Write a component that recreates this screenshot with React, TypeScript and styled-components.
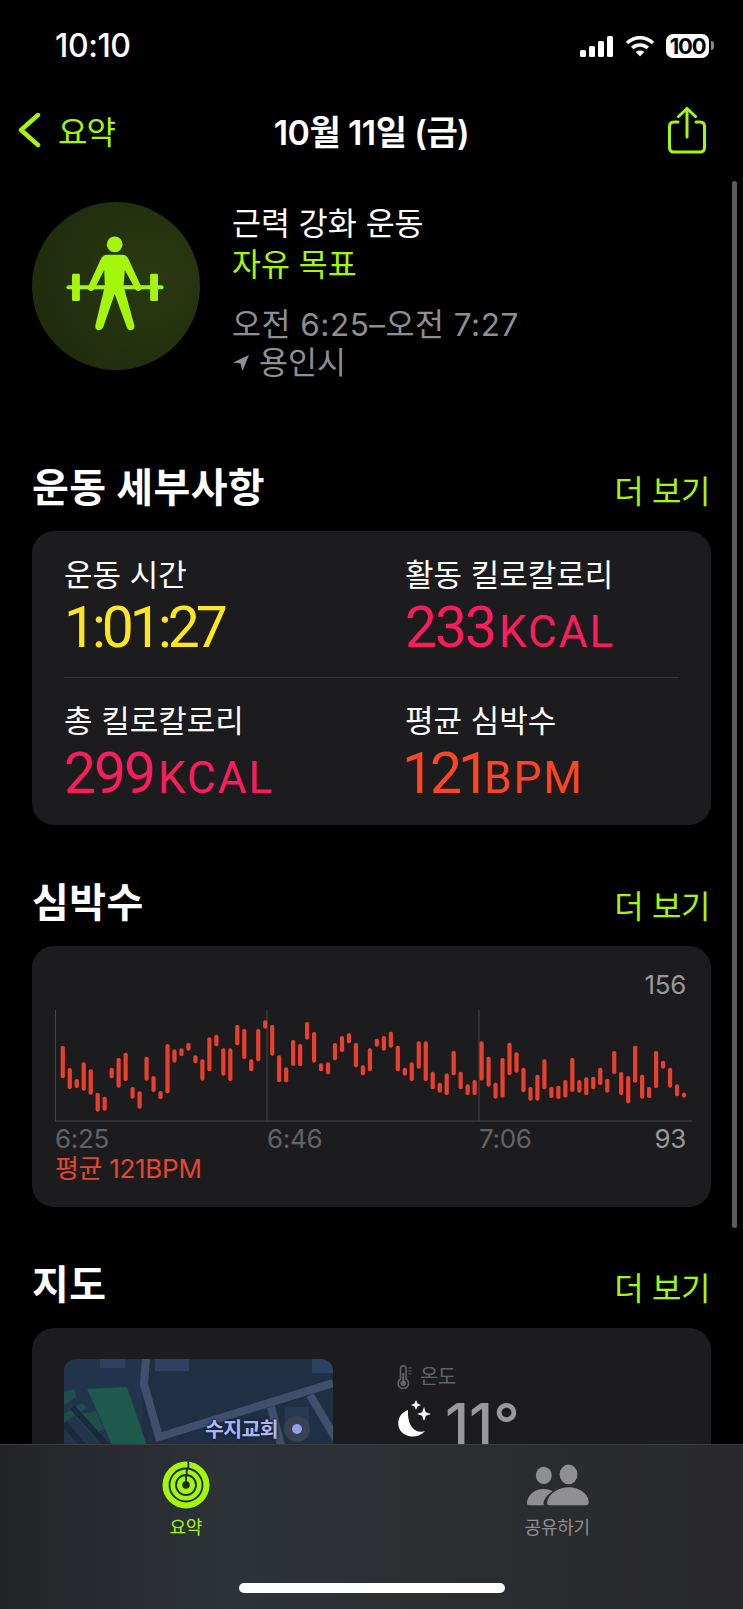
import styled, { createGlobalStyle } from 'styled-components';

const GREEN = '#a3f60c';
const FONT = 'Inter, "Noto Sans CJK KR", sans-serif';

// [top, bottom] of each heart-rate bar, in chart pixels x3
const HEART_BARS: [number, number][] = [
  [258, 355], [324, 387], [357, 384], [307, 392], [328, 404], [398, 455], [410, 452], [323, 355],
  [294, 383], [278, 363], [381, 416], [394, 446], [290, 362], [348, 396], [393, 417], [252, 400],
  [268, 308], [265, 288], [249, 272], [286, 310], [298, 362], [232, 334], [224, 259], [265, 347],
  [265, 363], [194, 256], [207, 297], [298, 334], [207, 304], [181, 206], [195, 287], [286, 367],
  [322, 367], [240, 318], [252, 318], [186, 239], [216, 308], [310, 334], [307, 343], [249, 301],
  [228, 276], [220, 250], [249, 322], [316, 346], [265, 334], [236, 260], [228, 272], [215, 263],
  [257, 334], [323, 347], [307, 363], [244, 326], [244, 363], [335, 388], [368, 398], [340, 405],
  [273, 346], [335, 388], [373, 405], [360, 405], [244, 362], [290, 380], [368, 416], [294, 413],
  [248, 346], [277, 338], [323, 397], [381, 422], [344, 422], [298, 388], [380, 414], [377, 417],
  [360, 413], [294, 396], [360, 398], [352, 405], [350, 388], [323, 375], [356, 398], [273, 342],
  [336, 405], [348, 430], [257, 368], [344, 416], [381, 414], [273, 384], [302, 326], [323, 383],
  [373, 409], [398, 413],
];

const GlobalStyle = createGlobalStyle`
  html, body {
    margin: 0;
    padding: 0;
    background: #000;
  }
  * {
    box-sizing: border-box;
  }
`;

const Screen = styled.div`
  position: relative;
  width: 743px;
  height: 1609px;
  overflow: hidden;
  background: #000;
  color: #fff;
  font-family: ${FONT};
`;

const StatusBar = styled.div`
  height: 92px;
  padding: 28px 34px 0 55px;
  display: flex;
  justify-content: space-between;
  align-items: flex-start;
`;

const Clock = styled.div`
  font-size: 32px;
  line-height: 36px;
  font-weight: 500;
  letter-spacing: -0.4px;
`;

const StatusIcons = styled.div`
  display: flex;
  align-items: center;
  height: 36px;
  gap: 10px;
`;

const Battery = styled.div`
  position: relative;
  width: 43px;
  height: 24px;
  border-radius: 7px;
  background: #fff;
  color: #000;
  font-size: 22px;
  font-weight: 700;
  line-height: 24px;
  text-align: center;
  letter-spacing: -1.2px;

  &::after {
    content: '';
    position: absolute;
    right: -5px;
    top: 7px;
    width: 3px;
    height: 9px;
    border-radius: 0 3px 3px 0;
    background: #8a8a8a;
  }
`;

const NavBar = styled.div`
  height: 76px;
  padding: 0 37px;
  display: grid;
  grid-template-columns: 1fr auto 1fr;
  align-items: center;
`;

const BackLink = styled.div`
  display: flex;
  align-items: center;
  gap: 17px;
  margin-left: -19px;
  color: ${GREEN};
  font-size: 32px;
  letter-spacing: -1px;
`;

const NavTitle = styled.div`
  font-size: 34px;
  font-weight: 600;
  letter-spacing: -0.6px;
`;

const NavAction = styled.div`
  display: flex;
  justify-content: flex-end;
`;

const Content = styled.div`
  padding: 34px 32px 0;
`;

const WorkoutHeader = styled.div`
  display: flex;
  gap: 32px;
  height: 168px;
`;

const WorkoutText = styled.div`
  padding-top: 1px;
  font-size: 31.5px;
  line-height: 41px;
`;

const WorkoutLine = styled.div<{ $color: string; $gap?: number; $tracking?: number }>`
  color: ${(p) => p.$color};
  margin-top: ${(p) => p.$gap ?? 0}px;
  letter-spacing: ${(p) => p.$tracking ?? 0}px;
  display: flex;
  align-items: center;
  gap: 9px;
`;

const Section = styled.section<{ $first?: boolean }>`
  margin-top: ${(p) => (p.$first ? 95 : 55)}px;
`;

const SectionHead = styled.div`
  height: 44px;
  margin-bottom: 22px;
  display: flex;
  justify-content: space-between;
  align-items: center;
`;

const SectionTitle = styled.h2`
  margin: 0;
  padding-bottom: 5px;
  font-size: 40px;
  font-weight: 700;
  letter-spacing: 0.4px;
`;

const MoreLink = styled.div`
  color: ${GREEN};
  font-size: 32px;
  letter-spacing: -0.4px;
  padding: 3px 1px 0 0;
`;

const Card = styled.div`
  background: #1c1c1e;
  border-radius: 22px;
`;

const MetricsCard = styled(Card)`
  height: 294px;
  padding: 24px 32px 0;
`;

const MetricsRow = styled.div<{ $divided?: boolean }>`
  display: grid;
  grid-template-columns: 341px 1fr;
  height: 123px;
  border-bottom: ${(p) => (p.$divided ? '1px solid #343436' : 'none')};
  margin-bottom: ${(p) => (p.$divided ? 23 : 0)}px;
`;

const MetricLabel = styled.div`
  font-size: 31px;
  line-height: 39px;
`;

const MetricValue = styled.div<{ $color: string; $tight?: boolean; $shift?: number }>`
  color: ${(p) => p.$color};
  font-family: Roboto, sans-serif;
  font-size: 57px;
  line-height: 58px;
  letter-spacing: ${(p) => (p.$tight ? -4 : -2)}px;
  margin: 5px 0 0 ${(p) => p.$shift ?? 0}px;
`;

const MetricUnit = styled.span<{ $gap?: number }>`
  font-size: 44px;
  letter-spacing: 2px;
  margin-left: ${(p) => p.$gap ?? 4}px;
`;

const HeartCard = styled(Card)`
  height: 261px;
  padding: 25px 0 0 23px;
`;

const ChartMax = styled.div`
  height: 39px;
  padding-right: 25px;
  text-align: right;
  color: #98989d;
  font-size: 26px;
  line-height: 28px;
  letter-spacing: -0.3px;
`;

const ChartSvg = styled.svg`
  display: block;
`;

const ChartLabels = styled.div`
  display: grid;
  grid-template-columns: 212px 212px 1fr auto;
  padding-right: 25px;
  margin-top: 2px;
  color: #636366;
  font-size: 26px;
  line-height: 29px;
  letter-spacing: -0.3px;
`;

const ChartMin = styled.span`
  color: #98989d;
`;

const ChartAverage = styled.div`
  color: #e8452c;
  font-size: 26px;
  line-height: 32px;
  letter-spacing: -0.3px;
`;

const MapCard = styled(Card)`
  height: 240px;
  padding: 31px 32px 0;
  display: flex;
  gap: 64px;
`;

const MapTile = styled.div`
  position: relative;
  width: 269px;
  height: 150px;
  border-radius: 12px;
  overflow: hidden;
`;

const MapLabel = styled.span`
  position: absolute;
  left: 141px;
  top: 58px;
  color: #a9b7f5;
  font-size: 20.5px;
  font-weight: 700;
  line-height: 26px;
  letter-spacing: -0.6px;
  text-shadow: 0 0 3px #141c2c, 0 0 3px #141c2c;
`;

const WeatherColumn = styled.div`
  display: flex;
  flex-direction: column;
`;

const WeatherLabel = styled.div`
  display: flex;
  align-items: center;
  gap: 8px;
  color: #636366;
  font-size: 20px;
  line-height: 24px;
  letter-spacing: -0.6px;
  margin-top: 6px;
`;

const WeatherNow = styled.div`
  display: flex;
  align-items: center;
  gap: 14px;
  margin-top: 5px;
  color: #98989d;
  font-size: 58px;
  line-height: 60px;
  font-weight: 500;
`;

const MoonSlot = styled.div`
  display: flex;
  margin-bottom: 10px;
`;

const TabBar = styled.nav`
  position: absolute;
  left: 0;
  right: 0;
  bottom: 0;
  height: 165px;
  padding-top: 9px;
  display: grid;
  grid-template-columns: 1fr 1fr;
  align-items: start;
  border-top: 1px solid #3d3e40;
  background: linear-gradient(90deg, #232427 0%, #2d3239 30%, #2c2e32 55%, #29292b 100%);
`;

const TabItem = styled.div<{ $active?: boolean }>`
  display: flex;
  flex-direction: column;
  align-items: center;
  color: ${(p) => (p.$active ? GREEN : '#8e8e93')};
  font-size: 18px;
  line-height: 22px;
  letter-spacing: -0.2px;
`;

const TabIconSlot = styled.div`
  height: 61px;
  display: flex;
  align-items: center;
  margin-bottom: 2px;
`;

const HomeIndicator = styled.div`
  position: absolute;
  left: 239px;
  bottom: 16px;
  width: 266px;
  height: 10px;
  border-radius: 5px;
  background: #fff;
`;

const ScrollThumb = styled.div`
  position: absolute;
  left: 732px;
  top: 181px;
  width: 5px;
  height: 1047px;
  border-radius: 3px;
  background: #5c5c5e;
`;

function SignalIcon() {
  return (
    <svg width="34" height="21" viewBox="0 0 34 21" fill="#fff">
      <rect x="0" y="14" width="6" height="7" rx="1.5" />
      <rect x="9" y="10" width="6" height="11" rx="1.5" />
      <rect x="18" y="5" width="6" height="16" rx="1.5" />
      <rect x="27" y="0" width="6" height="21" rx="1.5" />
    </svg>
  );
}

function WifiIcon() {
  return (
    <svg width="32" height="22" viewBox="0 0 30 22" fill="none" stroke="#fff" strokeWidth="3.6">
      <path d="M2 8 C9.5 1 20.5 1 28 8" />
      <path d="M7.2 13 C11.5 9 18.5 9 22.8 13" />
      <path d="M15 21.5 L10.8 17 C13 15 17 15 19.2 17 Z" fill="#fff" stroke="none" />
    </svg>
  );
}

function ChevronIcon() {
  return (
    <svg width="23" height="36" viewBox="0 0 23 36" fill="none" stroke={GREEN} strokeWidth="4.4" strokeLinecap="round" strokeLinejoin="round">
      <path d="M20 3 L3 18 L20 33" />
    </svg>
  );
}

function ShareIcon() {
  return (
    <svg width="38" height="47" viewBox="0 0 38 47" fill="none" stroke={GREEN} strokeWidth="3" strokeLinecap="round" strokeLinejoin="round">
      <path d="M10 15 H6 Q1.5 15 1.5 19.5 V40.5 Q1.5 45 6 45 H32 Q36.5 45 36.5 40.5 V19.5 Q36.5 15 32 15 H28" />
      <path d="M19 2 V30" />
      <path d="M10.5 9.5 L19 1.5 L27.5 9.5" />
    </svg>
  );
}

function WorkoutBadge() {
  return (
    <svg width="168" height="168" viewBox="6 6 512 512">
      <defs>
        <radialGradient id="badgeFill" cx="70%" cy="45%" r="75%">
          <stop offset="0%" stopColor="#2a3911" />
          <stop offset="100%" stopColor="#1f2b0d" />
        </radialGradient>
      </defs>
      <circle cx="262" cy="262" r="256" fill="url(#badgeFill)" />
      <g fill={GREEN}>
        <circle cx="258" cy="135" r="24" />
        <rect x="111" y="260" width="296" height="12" rx="6" />
        <rect x="128" y="225" width="24" height="83" rx="4" />
        <rect x="366" y="225" width="24" height="83" rx="4" />
        <path
          d="M236 167 H281 Q294 167 300 180 L339 264 Q342 274 331 277 Q324 278 320 270 L289 213 L285 262 L318 382 Q319 396 306 397 Q298 397 295 388 L258 286 L223 388 Q219 397 211 397 Q198 396 199 382 L228 262 L226 213 L197 270 Q192 278 185 277 Q174 274 177 264 L216 180 Q222 167 236 167 Z"
        />
      </g>
    </svg>
  );
}

function LocationArrow() {
  return (
    <svg width="18" height="18" viewBox="0 0 18 18" fill="#8e8e93">
      <path d="M17 1 L10.5 17 L8.5 9.5 L1 8.5 Z" />
    </svg>
  );
}

function HeartChart() {
  return (
    <ChartSvg width="637" height="112" viewBox="0 0 637 112">
      <line x1="0.5" y1="0" x2="0.5" y2="111" stroke="#48484a" />
      <line x1="212" y1="0" x2="212" y2="111" stroke="#48484a" />
      <line x1="424" y1="0" x2="424" y2="111" stroke="#48484a" />
      <line x1="0" y1="111" x2="637" y2="111" stroke="#48484a" />
      {HEART_BARS.map(([top, bottom], i) => (
        <rect
          key={i}
          x={5.7 + i * 6.98}
          y={top / 3 - 50}
          width="4.2"
          height={(bottom - top) / 3}
          rx="1.8"
          fill="#e8402a"
        />
      ))}
    </ChartSvg>
  );
}

function MapDrawing() {
  return (
    <svg width="269" height="150" viewBox="0 0 269 150" style={{ display: 'block' }}>
      <rect width="269" height="150" fill="#1f3045" />
      <rect x="0" y="0" width="78" height="150" fill="#22354c" />
      <rect x="36" y="0" width="25" height="9" fill="#2c4260" />
      <rect x="91" y="0" width="34" height="12" fill="#2c4260" />
      <rect x="248" y="0" width="21" height="14" fill="#2c4260" />
      <rect x="221" y="48" width="24" height="17" fill="#263a54" />
      <path d="M23 30 L63 28 L84 90 L50 90 Z" fill="#1d5a4b" />
      <path d="M0 33 L10 30 L12 38 L0 46 Z M0 55 L18 44 L22 49 L0 64 Z" fill="#1c5049" />
      <path d="M10 56 L32 52 L40 70 L28 76 Z" fill="#1c5049" />
      <path d="M8 48 L48 92 M0 64 L22 90" stroke="#1a2a3c" strokeWidth="6" fill="none" />
      <g fill="none" stroke="#3f506c" strokeWidth="8">
        <path d="M82 0 L80 25 L95 78 L269 24" />
        <path d="M207 48 L218 90" />
        <path d="M246 36 L272 80" />
      </g>
      <circle cx="233" cy="70" r="13" fill="#37424e" />
      <circle cx="233" cy="70" r="5" fill="#929ff0" />
    </svg>
  );
}

function ThermometerIcon() {
  return (
    <svg width="15" height="24" viewBox="0 0 15 24" fill="none" stroke="#636366" strokeWidth="1.6">
      <path d="M3.5 3.5 a2.8 2.8 0 0 1 5.6 0 V14 a5.2 5.2 0 1 1 -5.6 0 Z" />
      <circle cx="6.3" cy="18.3" r="2.8" fill="#636366" stroke="none" />
      <path d="M6.3 8 V17" strokeWidth="2" />
      <path d="M11.5 3 H14.5 M11.5 6 H14.5 M11.5 9 H14.5" strokeWidth="1" />
    </svg>
  );
}

function MoonIcon() {
  return (
    <svg width="34" height="38" viewBox="0 0 34 38" fill="#fff">
      <path d="M11 10 C2 13 -1 23 3 30 C8 38 21 39 28 31 C20 34 10 28 11 10 Z" />
      <path d="M19 0 L20.4 3.6 L24 5 L20.4 6.4 L19 10 L17.6 6.4 L14 5 L17.6 3.6 Z" />
      <path d="M27 7 L28.8 12.2 L34 14 L28.8 15.8 L27 21 L25.2 15.8 L20 14 L25.2 12.2 Z" />
    </svg>
  );
}

function RingsIcon() {
  return (
    <svg width="48" height="48" viewBox="-24 -24 48 48" fill="none">
      <circle r="23.5" fill={GREEN} />
      <circle r="16.5" stroke="#1f2a16" strokeWidth="1.8" />
      <circle r="10" stroke="#1f2a16" strokeWidth="1.8" />
      <circle r="3.8" fill="#1f2a16" />
      <path d="M2 -23.5 C3 -19 3 -17 1 -15.5 C0 -13 1.5 -11 0.5 -9" stroke="#1f2a16" strokeWidth="1.8" />
      <path d="M0 -10 V-3" stroke="#1f2a16" strokeWidth="1.8" />
    </svg>
  );
}

function PeopleIcon() {
  return (
    <svg width="66" height="45" viewBox="40 25 200 135" fill="#8e8e93">
      <ellipse cx="100" cy="65" rx="24" ry="26" />
      <ellipse cx="175" cy="62" rx="27" ry="30" />
      <path d="M118 155 Q109 155 110 146 C114 120 145 101 175 101 C205 101 236 120 236 146 Q236 155 228 155 Z" />
      <path d="M101 155 H56 Q48 155 49 146 C53 122 74 106 98 106 C108 106 118 108 127 113 C112 122 102 135 99 148 Q99 152 101 155 Z" />
    </svg>
  );
}

export default function App(): JSX.Element {
  return (
    <Screen>
      <GlobalStyle />
      <StatusBar>
        <Clock>10:10</Clock>
        <StatusIcons>
          <SignalIcon />
          <WifiIcon />
          <Battery>100</Battery>
        </StatusIcons>
      </StatusBar>

      <NavBar>
        <BackLink>
          <ChevronIcon />
          요약
        </BackLink>
        <NavTitle>10월 11일 (금)</NavTitle>
        <NavAction>
          <ShareIcon />
        </NavAction>
      </NavBar>

      <Content>
        <WorkoutHeader>
          <WorkoutBadge />
          <WorkoutText>
            <WorkoutLine $color="#fff">근력 강화 운동</WorkoutLine>
            <WorkoutLine $color={GREEN}>자유 목표</WorkoutLine>
            <WorkoutLine $color="#8e8e93" $gap={19} $tracking={0.5}>오전 6:25–오전 7:27</WorkoutLine>
            <WorkoutLine $color="#8e8e93" $gap={-3}>
              <LocationArrow />
              용인시
            </WorkoutLine>
          </WorkoutText>
        </WorkoutHeader>

        <Section $first>
          <SectionHead>
            <SectionTitle>운동 세부사항</SectionTitle>
            <MoreLink>더 보기</MoreLink>
          </SectionHead>
          <MetricsCard>
            <MetricsRow $divided>
              <div>
                <MetricLabel>운동 시간</MetricLabel>
                <MetricValue $color="#ffe620" $tight>1:01:27</MetricValue>
              </div>
              <div>
                <MetricLabel>활동 킬로칼로리</MetricLabel>
                <MetricValue $color="#fa1c5c">
                  233<MetricUnit>KCAL</MetricUnit>
                </MetricValue>
              </div>
            </MetricsRow>
            <MetricsRow>
              <div>
                <MetricLabel>총 킬로칼로리</MetricLabel>
                <MetricValue $color="#fa1c5c">
                  299<MetricUnit>KCAL</MetricUnit>
                </MetricValue>
              </div>
              <div>
                <MetricLabel>평균 심박수</MetricLabel>
                <MetricValue $color="#ff4422" $tight $shift={-3}>
                  121<MetricUnit $gap={-2}>BPM</MetricUnit>
                </MetricValue>
              </div>
            </MetricsRow>
          </MetricsCard>
        </Section>

        <Section>
          <SectionHead>
            <SectionTitle>심박수</SectionTitle>
            <MoreLink>더 보기</MoreLink>
          </SectionHead>
          <HeartCard>
            <ChartMax>156</ChartMax>
            <HeartChart />
            <ChartLabels>
              <span>6:25</span>
              <span>6:46</span>
              <span>7:06</span>
              <ChartMin>93</ChartMin>
            </ChartLabels>
            <ChartAverage>평균 121BPM</ChartAverage>
          </HeartCard>
        </Section>

        <Section>
          <SectionHead>
            <SectionTitle>지도</SectionTitle>
            <MoreLink>더 보기</MoreLink>
          </SectionHead>
          <MapCard>
            <MapTile>
              <MapDrawing />
              <MapLabel>수지교회</MapLabel>
            </MapTile>
            <WeatherColumn>
              <WeatherLabel>
                <ThermometerIcon />
                온도
              </WeatherLabel>
              <WeatherNow>
                <MoonSlot>
                  <MoonIcon />
                </MoonSlot>
                11°
              </WeatherNow>
            </WeatherColumn>
          </MapCard>
        </Section>
      </Content>

      <ScrollThumb />

      <TabBar>
        <TabItem $active>
          <TabIconSlot>
            <RingsIcon />
          </TabIconSlot>
          요약
        </TabItem>
        <TabItem>
          <TabIconSlot>
            <PeopleIcon />
          </TabIconSlot>
          공유하기
        </TabItem>
      </TabBar>
      <HomeIndicator />
    </Screen>
  );
}
